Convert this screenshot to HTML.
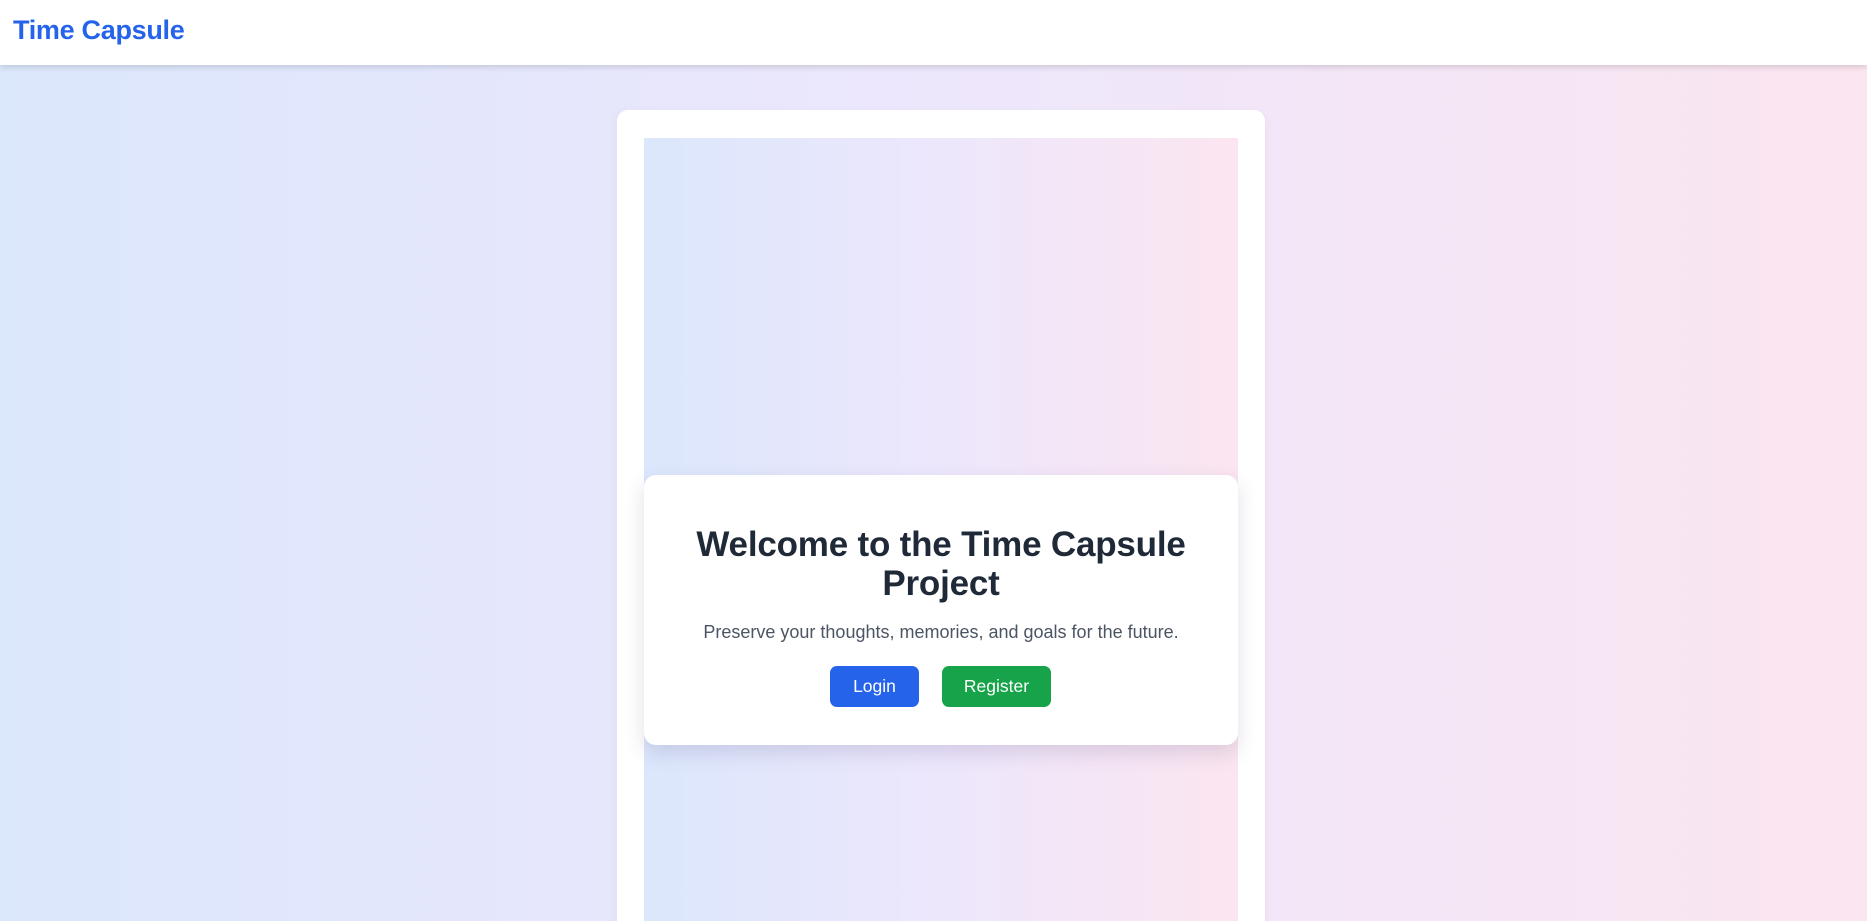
<!DOCTYPE html>
<html><head><meta charset="utf-8"><style>
html,body{margin:0;padding:0;width:1867px;height:921px;overflow:hidden;font-family:"Liberation Sans",sans-serif;}
body{background:linear-gradient(90deg,#dbe7fc 0%,#ede7fc 50%,#fbe5f0 100%);position:relative;}
.hdr{position:absolute;left:0;top:0;width:1867px;height:65px;background:#fff;box-shadow:0 2px 6px rgba(0,0,0,.15);}
.hdr span{position:absolute;left:13px;top:15px;font-size:27px;font-weight:bold;color:#2563eb;letter-spacing:-0.3px;}
.outer{position:absolute;left:617px;top:110px;width:648px;height:830px;background:#fff;border-radius:11px;box-shadow:0 4px 12px rgba(0,0,0,.05);}
.inner{position:absolute;left:644px;top:138px;width:594px;height:800px;background:linear-gradient(90deg,#dbe7fc,#ede7fc 50%,#fbe5f0);}
.card{position:absolute;left:644px;top:475px;width:594px;height:270px;background:#fff;border-radius:12px;box-shadow:0 8px 20px rgba(60,40,100,.15);text-align:center;}
.card h1{margin:0;position:absolute;top:50px;left:0;width:594px;font-size:35px;line-height:39px;font-weight:900;color:#1f2937;letter-spacing:-0.2px;}
.card p{position:absolute;top:147px;left:0;width:594px;margin:0;font-size:18px;color:#4b5563;}
.btn{position:absolute;top:191px;height:41px;line-height:41px;color:#fff;font-size:17.5px;border-radius:7px;}
</style></head><body>
<div class="hdr"><span>Time Capsule</span></div>
<div class="outer"></div>
<div class="inner"></div>
<div class="card">
<h1>Welcome to the Time Capsule<br>Project</h1>
<p>Preserve your thoughts, memories, and goals for the future.</p>
<div class="btn" style="left:186px;width:89px;background:#2563eb">Login</div>
<div class="btn" style="left:298px;width:109px;background:#16a34a">Register</div>
</div>
</body></html>
